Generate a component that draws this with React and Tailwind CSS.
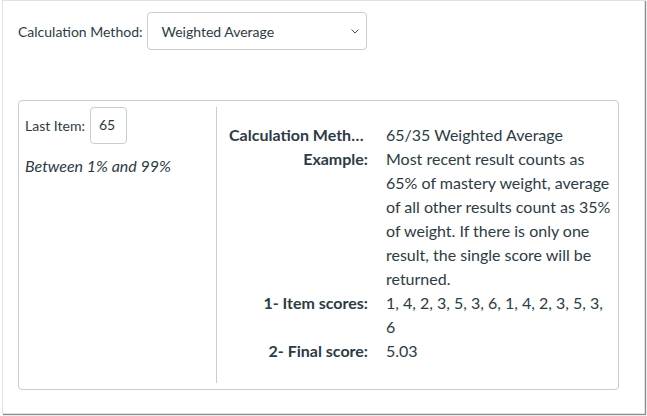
import React from 'react';

const rows = [
  { label: 'Calculation Method', value: '65/35 Weighted Average' },
  {
    label: 'Example:',
    value:
      'Most recent result counts as 65% of mastery weight, average of all other results count as 35% of weight. If there is only one result, the single score will be returned.',
  },
  { label: '1- Item scores:', value: '1, 4, 2, 3, 5, 3, 6, 1, 4, 2, 3, 5, 3, 6' },
  { label: '2- Final score:', value: '5.03' },
];

const App = () => {
  return (
    <div className="w-[647px] h-[416px] bg-white text-[#2d3b45] font-['Lato','Noto_Sans',sans-serif]">
      <div className="ml-[2px] w-[643px] h-[414px] border border-[#e2e2e2] shadow-[1px_1px_1px_rgba(0,0,0,0.45)] pl-[15px]">
        {/* calculation method picker */}
        <div className="flex items-center pt-[11px]">
          <span className="text-[14px]">Calculation Method:</span>
          <div className="ml-[5px] w-[220px] h-[38px] border border-[#c7cdd1] rounded-[4px] flex items-center justify-between pl-[13px] pr-[6px]">
            <span className="text-[14px]">Weighted Average</span>
            <svg width="10" height="10" viewBox="0 0 10 10" fill="none" stroke="#2d3b45" strokeWidth="0.9">
              <path d="M1.5 3.5 L5 7 L8.5 3.5" />
            </svg>
          </div>
        </div>

        {/* details card */}
        <div className="mt-[50px] w-[601px] h-[290px] border border-[#c7cdd1] rounded-[4px] p-[6px] flex">
          <div className="w-[192px] border-r border-[#c7cdd1]">
            <div className="flex items-center">
              <span className="text-[14px]">Last Item:</span>
              <div className="ml-[5px] w-[37px] h-[37px] border border-[#c7cdd1] rounded-[4px] flex items-center pl-[8px] pb-[3px] text-[14px]">
                65
              </div>
            </div>
            <p className="italic text-[16px] mt-[10px]">Between 1% and 99%</p>
          </div>

          <div className="flex-1 pl-[12px] pt-[16px]">
            <div className="grid grid-cols-[139px_1fr] gap-x-[18px] text-[16px] leading-[24px]">
              {rows.map((r) => (
                <React.Fragment key={r.label}>
                  <div className="font-bold text-right truncate">{r.label}</div>
                  <div>{r.value}</div>
                </React.Fragment>
              ))}
            </div>
          </div>
        </div>
      </div>
    </div>
  );
};

export default App;
